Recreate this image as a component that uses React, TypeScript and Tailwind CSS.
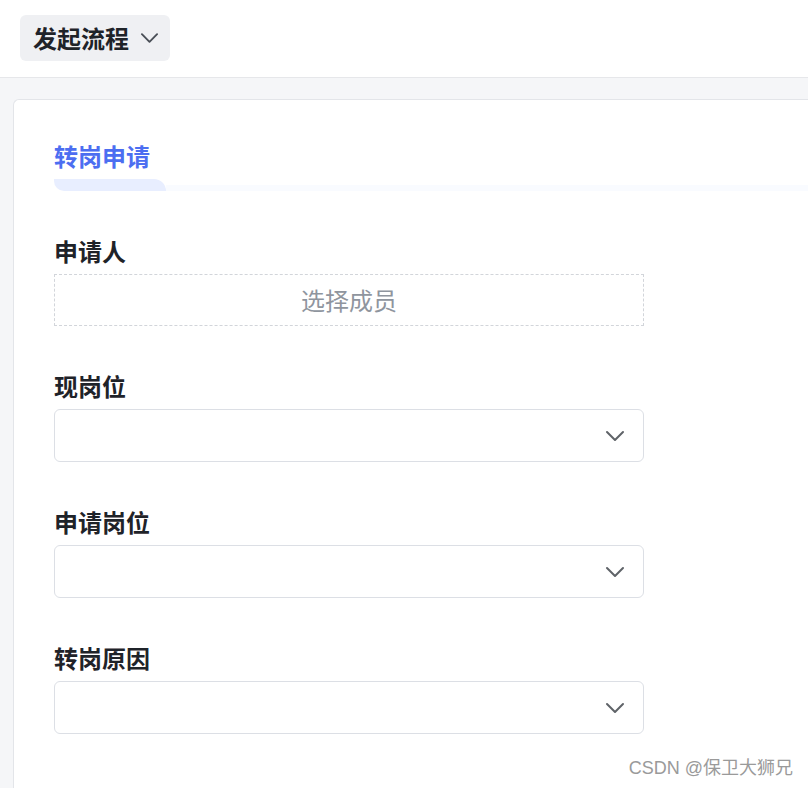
import { FC } from "react";

const font = { fontFamily: '"Noto Sans CJK SC", "Noto Sans", sans-serif' };

const Chevron: FC<{ className?: string }> = ({ className }) => (
  <svg className={className} viewBox="0 0 20 12" fill="none">
    <path
      d="M2 2l8 8 8-8"
      stroke="currentColor"
      strokeWidth="2"
      strokeLinecap="round"
      strokeLinejoin="round"
    />
  </svg>
);

const Field: FC<{ label: string; children: React.ReactNode }> = ({
  label,
  children,
}) => (
  <div className="flex flex-col">
    <div className="h-[32px] pb-[3px] text-[24px] leading-[29px] font-bold text-[#1f2329]">
      {label}
    </div>
    <div className="mt-[6px]">{children}</div>
  </div>
);

const SelectBox: FC = () => (
  <div className="flex h-[53px] w-[590px] items-center justify-end rounded-[6px] border border-[#dcdfe5] bg-white pr-[18px]">
    <Chevron className="h-[12px] w-[20px] text-[#5f6368]" />
  </div>
);

export default function App() {
  return (
    <div className="relative flex min-h-screen flex-col bg-[#f5f6f8]" style={font}>
      <header className="flex h-[78px] shrink-0 items-start border-b border-[#e6e7ea] bg-white pl-[20px] pt-[15px]">
        <button className="flex h-[46px] w-[150px] items-center gap-[11px] rounded-[6px] bg-[#eff0f3] pl-[13px]">
          <span className="text-[24px] leading-[32px] font-bold text-[#1f2329]">
            发起流程
          </span>
          <Chevron className="h-[12px] w-[19px] text-[#4a4f57]" />
        </button>
      </header>

      <main className="flex flex-1 pl-[13px] pt-[21px]">
        <section className="flex-1 rounded-tl-[6px] border-l border-t border-[#e3e5e9] bg-white pl-[40px] pt-[41px]">
          <div className="flex flex-col">
            <div className="h-[32px] pb-[3px] text-[24px] leading-[29px] font-bold text-[#4c6ef1]">
              转岗申请
            </div>
            <div className="mt-[6px] flex items-end">
              <div className="h-[12px] w-[112px] rounded-bl-[10px] rounded-tr-[12px] bg-[#e8eeff]" />
              <div className="h-[6px] flex-1 bg-[#f9fbff]" />
            </div>
          </div>

          <div className="mt-[45px] flex flex-col gap-[45px]">
            <Field label="申请人">
              <div className="flex h-[52px] w-[590px] items-center justify-center border border-dashed border-[#d2d5da] text-[24px] text-[#8f959e]">
                选择成员
              </div>
            </Field>
            <Field label="现岗位">
              <SelectBox />
            </Field>
            <Field label="申请岗位">
              <SelectBox />
            </Field>
            <Field label="转岗原因">
              <SelectBox />
            </Field>
          </div>
        </section>
      </main>

      <div
        className="absolute bottom-[8px] right-[15px] text-[18px] leading-[24px] text-[#9a9a9a]"
        style={{ fontFamily: '"Liberation Sans", "Noto Sans CJK SC", sans-serif' }}
      >
        CSDN @保卫大狮兄
      </div>
    </div>
  );
}
